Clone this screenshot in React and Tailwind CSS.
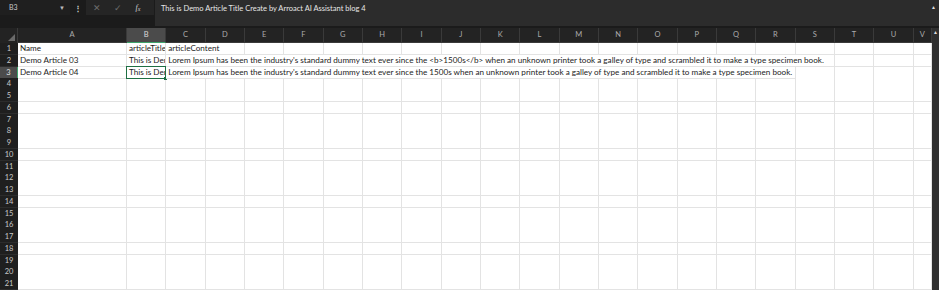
import React from "react";

const COLS = ["A","B","C","D","E","F","G","H","I","J","K","L","M","N","O","P","Q","R","S","T","U","V"];
const ROWS = Array.from({ length: 21 }, (_, i) => i + 1);

const LOREM_HTML =
  "Lorem Ipsum has been the industry's standard dummy text ever since the <b>1500s</b> when an unknown printer took a galley of type and scrambled it to make a type specimen book.";
const LOREM =
  "Lorem Ipsum has been the industry's standard dummy text ever since the 1500s when an unknown printer took a galley of type and scrambled it to make a type specimen book.";

// row -> cells: [colIndex, span, text, clip]
const DATA = {
  1: [[0, 1, "Name"], [1, 1, "articleTitle", true], [2, 2, "articleContent"]],
  2: [[0, 1, "Demo Article 03"], [1, 1, "This is Demo Article Title", true], [2, 17, LOREM_HTML]],
  3: [[0, 1, "Demo Article 04"], [1, 1, "This is Demo Article Title", true], [2, 16, LOREM]],
};

function Row({ r }) {
  const cells = [];
  const filled = DATA[r] || [];
  let c = 0;
  while (c < COLS.length) {
    const hit = filled.find((f) => f[0] === c);
    if (hit) {
      const [, span, text, clip] = hit;
      const sel = r === 3 && c === 1;
      cells.push(
        <div
          key={c}
          style={{ gridColumn: `span ${span} / span ${span}` }}
          className="relative h-full bg-white border-r border-b border-[#e3e3e3] leading-[11px] whitespace-nowrap text-[#1c1c1c]"
        >
          <div className={`pl-[2px] ${clip ? "overflow-hidden" : ""}`}>{text}</div>
          {sel && (
            <>
              <div className="absolute inset-[-1px] border-[1.5px] border-[#1e6f43]" />
              <div className="absolute right-[-2px] bottom-[-2px] w-[3px] h-[3px] bg-[#1e6f43]" />
            </>
          )}
        </div>
      );
      c += span;
    } else {
      cells.push(<div key={c} className="h-full bg-white border-r border-b border-[#e3e3e3]" />);
      c += 1;
    }
  }
  return cells;
}

export default function App() {
  return (
    <div className="w-[939px] h-[290px] overflow-hidden bg-[#1b1b1b] font-['Lato',sans-serif] text-[8.15px] flex flex-col">
      {/* formula bar */}
      <div className="flex h-[28px] shrink-0">
        <div className="flex h-[15px] items-center">
          <div className="w-[70px] h-full bg-[#1f1f1f] flex items-center justify-between pl-[9px] pr-[5px] text-[#c8c8c8] text-[7px]">
            <span>B3</span>
            <span className="text-[6px] text-[#bbb]">▼</span>
          </div>
          <div className="w-[16px] text-center text-[#cfcfcf] text-[8px] font-bold">⋮</div>
          <div className="w-[68px] h-full bg-[#252525] flex items-center text-[#6d6d6d]">
            <span className="w-[22px] text-center text-[9px]">✕</span>
            <span className="w-[20px] text-center text-[9px]">✓</span>
            <span className="w-[20px] text-center text-[#d0d0d0] italic font-['Liberation_Serif',serif] text-[8px]">
              f<sub className="text-[6px]">x</sub>
            </span>
          </div>
        </div>
        <div className="ml-[1px] flex-1 h-[26px] bg-[#2c2c2c] flex items-start justify-between pl-[6px] pr-[3px] pt-[3px] text-[#e6e6e6] text-[7.5px]">
          <span>This is Demo Article Title Create by Arroact AI Assistant blog 4</span>
          <span className="text-[5px] text-[#ddd] mt-[1px]">▲</span>
        </div>
      </div>

      {/* sheet */}
      <div className="flex flex-1 min-h-0">
        <div className="flex-1 min-w-0">
          {/* column headers */}
          <div className="grid grid-cols-[18px_109px_repeat(20,39.33px)_1fr] h-[15px] bg-[#232323] text-[#ababab] text-[7.5px]">
            <div className="relative border-r border-[#3a3a3a]">
              <div className="absolute right-[2px] bottom-[2px] w-0 h-0 border-l-[7px] border-l-transparent border-b-[7px] border-b-[#6a6a6a]" />
            </div>
            {COLS.map((c) => (
              <div
                key={c}
                className={`flex items-center justify-center border-r border-[#3a3a3a] ${
                  c === "B" ? "bg-[#4b4b4b] text-[#d8d8d8] border-b-[1.5px] border-b-[#3fa36b]" : "border-b border-b-[#3a3a3a]"
                }`}
              >
                {c}
              </div>
            ))}
          </div>
          {/* rows */}
          {ROWS.map((r) => (
            <div key={r} className="grid grid-cols-[18px_109px_repeat(20,39.33px)_1fr] h-[11.76px]">
              <div
                className={`flex items-center justify-center border-b border-[#2c2c2c] text-[7.5px] ${
                  r === 3 ? "bg-[#4b4b4b] text-[#e0e0e0] border-r-[1.5px] border-r-[#3fa36b]" : "bg-[#1f1f1f] text-[#c8c8c8]"
                }`}
              >
                {r}
              </div>
              <Row r={r} />
            </div>
          ))}
        </div>
        {/* vertical scrollbar */}
        <div className="w-[7px] bg-[#2f2f2f] flex flex-col items-center">
          <span className="text-[5px] text-[#ddd] leading-[8px]">▲</span>
        </div>
      </div>
    </div>
  );
}
